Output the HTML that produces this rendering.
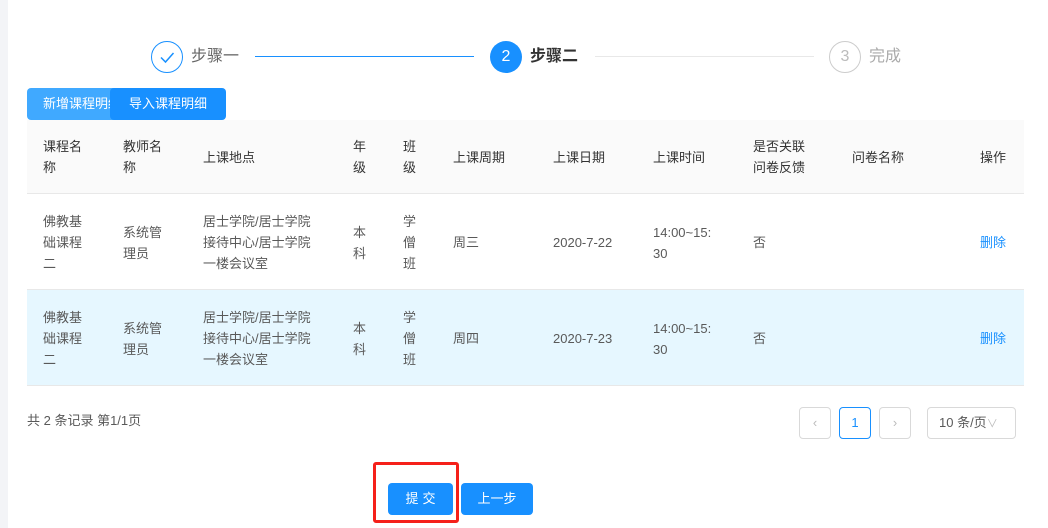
<!DOCTYPE html>
<html><head><meta charset="utf-8"><style>
*{margin:0;padding:0;box-sizing:border-box}
body{width:1048px;height:528px;background:#fff;font-family:"Liberation Sans","Noto Sans CJK SC",sans-serif;font-size:13px;color:#595959;position:relative;overflow:hidden}
.a{position:absolute}
.strip{left:0;top:0;width:8px;height:528px;background:#f3f4f7}
.c{line-height:21px}
.hd{background:#fafafa;left:27px;top:120px;width:997px;height:74px;border-bottom:1px solid #e8e8e8}
.r1{left:27px;top:194px;width:997px;height:96px;border-bottom:1px solid #e8e8e8}
.r2{left:27px;top:290px;width:997px;height:96px;background:#e6f7ff;border-bottom:1px solid #e8e8e8}
.hdt{color:#333}
.btn{background:#1890ff;color:#fff;border-radius:4px;text-align:center}
.pg{border:1px solid #d9d9d9;border-radius:4px;width:32px;height:32px;top:407px;text-align:center;line-height:30px;color:#bbb}
.st{top:46px;font-size:16px;line-height:22px}
</style></head><body>
<div class="a strip"></div>
<div class="a" style="left:151px;top:41px;width:32px;height:32px;border:1px solid #1890ff;border-radius:50%"><svg width="30" height="30" viewBox="0 0 30 30"><path d="M9 15.5l4.5 4.5 8-9" fill="none" stroke="#1890ff" stroke-width="1.5"/></svg></div>
<div class="a st" style="left:191px;color:#666">步骤一</div>
<div class="a" style="left:255px;top:56px;width:219px;height:1px;background:#1890ff"></div>
<div class="a" style="left:490px;top:41px;width:32px;height:32px;background:#1890ff;border-radius:50%;color:#fff;font-size:16px;text-align:center;line-height:32px">2</div>
<div class="a st" style="left:530px;color:#333;font-weight:bold">步骤二</div>
<div class="a" style="left:595px;top:56px;width:219px;height:1px;background:#e8e8e8"></div>
<div class="a" style="left:829px;top:41px;width:32px;height:32px;border:1px solid #ccc;border-radius:50%;color:#bbb;font-size:16px;text-align:center;line-height:30px">3</div>
<div class="a st" style="left:869px;color:#aaa">完成</div>
<div class="a btn" style="left:27px;top:88px;height:32px;line-height:32px;background:#40a9ff;text-align:left;padding-left:16px;overflow:hidden;white-space:nowrap;width:100px;border-radius:4px 0 0 4px">新增课程明细</div>
<div class="a btn" style="left:110px;top:88px;width:116px;height:32px;line-height:32px">导入课程明细</div>
<div class="a hd"></div><div class="a r1"></div><div class="a r2"></div>
<div class="a c hdt" style="left:43px;top:136px">课程名<br>称</div>
<div class="a c hdt" style="left:123px;top:136px">教师名<br>称</div>
<div class="a c hdt" style="left:203px;top:147px">上课地点</div>
<div class="a c hdt" style="left:353px;top:136px">年<br>级</div>
<div class="a c hdt" style="left:403px;top:136px">班<br>级</div>
<div class="a c hdt" style="left:453px;top:147px">上课周期</div>
<div class="a c hdt" style="left:553px;top:147px">上课日期</div>
<div class="a c hdt" style="left:653px;top:147px">上课时间</div>
<div class="a c hdt" style="left:753px;top:136px">是否关联<br>问卷反馈</div>
<div class="a c hdt" style="left:852px;top:147px">问卷名称</div>
<div class="a c hdt" style="left:980px;top:147px">操作</div>

<div class="a c" style="left:43px;top:211px">佛教基<br>础课程<br>二</div>
<div class="a c" style="left:123px;top:222px">系统管<br>理员</div>
<div class="a c" style="left:203px;top:211px">居士学院/居士学院<br>接待中心/居士学院<br>一楼会议室</div>
<div class="a c" style="left:353px;top:222px">本<br>科</div>
<div class="a c" style="left:403px;top:211px">学<br>僧<br>班</div>
<div class="a c" style="left:453px;top:232px">周三</div>
<div class="a c" style="left:553px;top:232px">2020-7-22</div>
<div class="a c" style="left:653px;top:222px">14:00~15:<br>30</div>
<div class="a c" style="left:753px;top:232px">否</div>
<div class="a c" style="left:980px;top:232px;color:#1890ff">删除</div>

<div class="a c" style="left:43px;top:307px">佛教基<br>础课程<br>二</div>
<div class="a c" style="left:123px;top:318px">系统管<br>理员</div>
<div class="a c" style="left:203px;top:307px">居士学院/居士学院<br>接待中心/居士学院<br>一楼会议室</div>
<div class="a c" style="left:353px;top:318px">本<br>科</div>
<div class="a c" style="left:403px;top:307px">学<br>僧<br>班</div>
<div class="a c" style="left:453px;top:328px">周四</div>
<div class="a c" style="left:553px;top:328px">2020-7-23</div>
<div class="a c" style="left:653px;top:318px">14:00~15:<br>30</div>
<div class="a c" style="left:753px;top:328px">否</div>
<div class="a c" style="left:980px;top:328px;color:#1890ff">删除</div>
<div class="a" style="left:27px;top:410px;color:#595959">共 2 条记录 第1/1页</div>
<div class="a pg" style="left:799px">‹</div>
<div class="a pg" style="left:839px;border-color:#1890ff;color:#1890ff">1</div>
<div class="a pg" style="left:879px">›</div>
<div class="a pg" style="left:927px;width:89px;color:#595959;text-align:left;padding-left:11px">10 条/页<span style="color:#bbb;font-size:11px">∨</span></div>
<div class="a" style="left:373px;top:462px;width:86px;height:61px;border:3px solid #f5201a;border-radius:3px"></div>
<div class="a btn" style="left:388px;top:483px;width:65px;height:32px;line-height:32px;letter-spacing:4px;padding-left:4px">提交</div>
<div class="a btn" style="left:461px;top:483px;width:72px;height:32px;line-height:32px">上一步</div>
</body></html>
